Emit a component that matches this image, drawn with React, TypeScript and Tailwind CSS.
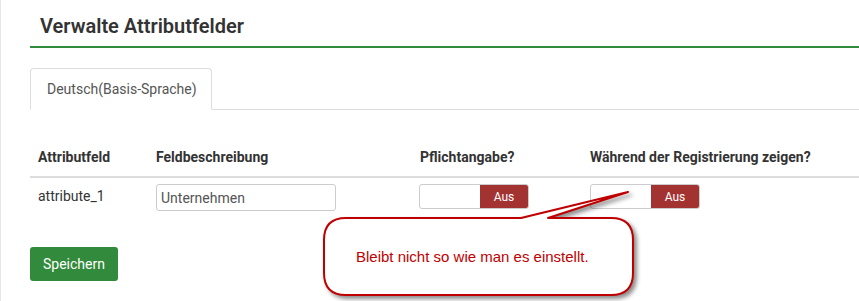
import React from "react";

function Toggle() {
  return (
    <div className="flex h-[25px] w-[110px] overflow-hidden rounded-[3px] border border-[#cccccc] bg-white">
      <div className="w-[60px]" />
      <div className="flex flex-1 items-center justify-center bg-[#a33331] text-[12px] text-white">Aus</div>
    </div>
  );
}

function Callout() {
  return (
    <>
      <svg
        className="absolute left-[318px] top-[186px] drop-shadow-[3px_3px_2px_rgba(0,0,0,0.45)]"
        width="330"
        height="115"
        viewBox="0 0 330 115"
      >
        <path
          d="M 27 32 L 202 32 L 309 6 L 229 32 L 292 32 Q 314 32 314 54 L 314 87 Q 314 109 292 109 L 27 109 Q 5 109 5 87 L 5 54 Q 5 32 27 32 Z"
          fill="#ffffff"
          stroke="#c00000"
          strokeWidth="2"
          strokeLinejoin="round"
        />
      </svg>
      <div className="absolute left-[355px] top-[247px] font-['Liberation_Sans',Arial,sans-serif] text-[15px] leading-[20px] text-[#c00000]">
        Bleibt nicht so wie man es einstellt.
      </div>
    </>
  );
}

export default function App() {
  return (
    <div className="relative h-[301px] w-[859px] overflow-hidden border-l border-[#e6e6e6] bg-white pl-[29px] font-['Roboto',sans-serif] text-[14px] text-[#333333]">
      {/* page heading */}
      <div className="border-b-2 border-[#328a3c] pl-[10px] pt-[13px] pb-[7px]">
        <h1 className="text-[20px] font-semibold leading-[26px] text-[#333333]">Verwalte Attributfelder</h1>
      </div>

      {/* language tabs */}
      <div className="mt-[20px] flex border-b border-[#dddddd]">
        <div className="-mb-px flex h-[42px] w-[182px] items-center rounded-t-[4px] border border-[#dddddd] border-b-white bg-white pl-[16px] text-[#555555]">
          Deutsch(Basis-Sprache)
        </div>
      </div>

      <table className="mt-[29px] w-full border-collapse text-left">
        <thead>
          <tr className="border-b-2 border-[#dddddd]">
            <th className="w-[118px] px-[8px] py-[8px] align-bottom font-bold">Attributfeld</th>
            <th className="w-[264px] px-[8px] py-[8px] align-bottom font-bold">Feldbeschreibung</th>
            <th className="w-[170px] px-[8px] py-[8px] align-bottom font-bold">Pflichtangabe?</th>
            <th className="px-[8px] py-[8px] align-bottom font-bold">Während der Registrierung zeigen?</th>
          </tr>
        </thead>
        <tbody>
          <tr>
            <td className="px-[8px] py-[8px] align-top leading-[20px]">attribute_1</td>
            <td className="px-[8px] pt-[6px] align-top">
              <input
                defaultValue="Unternehmen"
                className="h-[27px] w-[180px] rounded-[3px] border border-[#cccccc] px-[4px] text-[14px] text-[#555555] outline-none"
              />
            </td>
            <td className="px-[7px] pt-[6px] align-top">
              <Toggle />
            </td>
            <td className="px-[8px] pt-[6px] align-top">
              <Toggle />
            </td>
          </tr>
        </tbody>
      </table>

      <button className="mt-[33px] h-[34px] w-[88px] rounded-[3px] bg-[#328a3c] text-[14px] text-white">Speichern</button>

      <Callout />
    </div>
  );
}
